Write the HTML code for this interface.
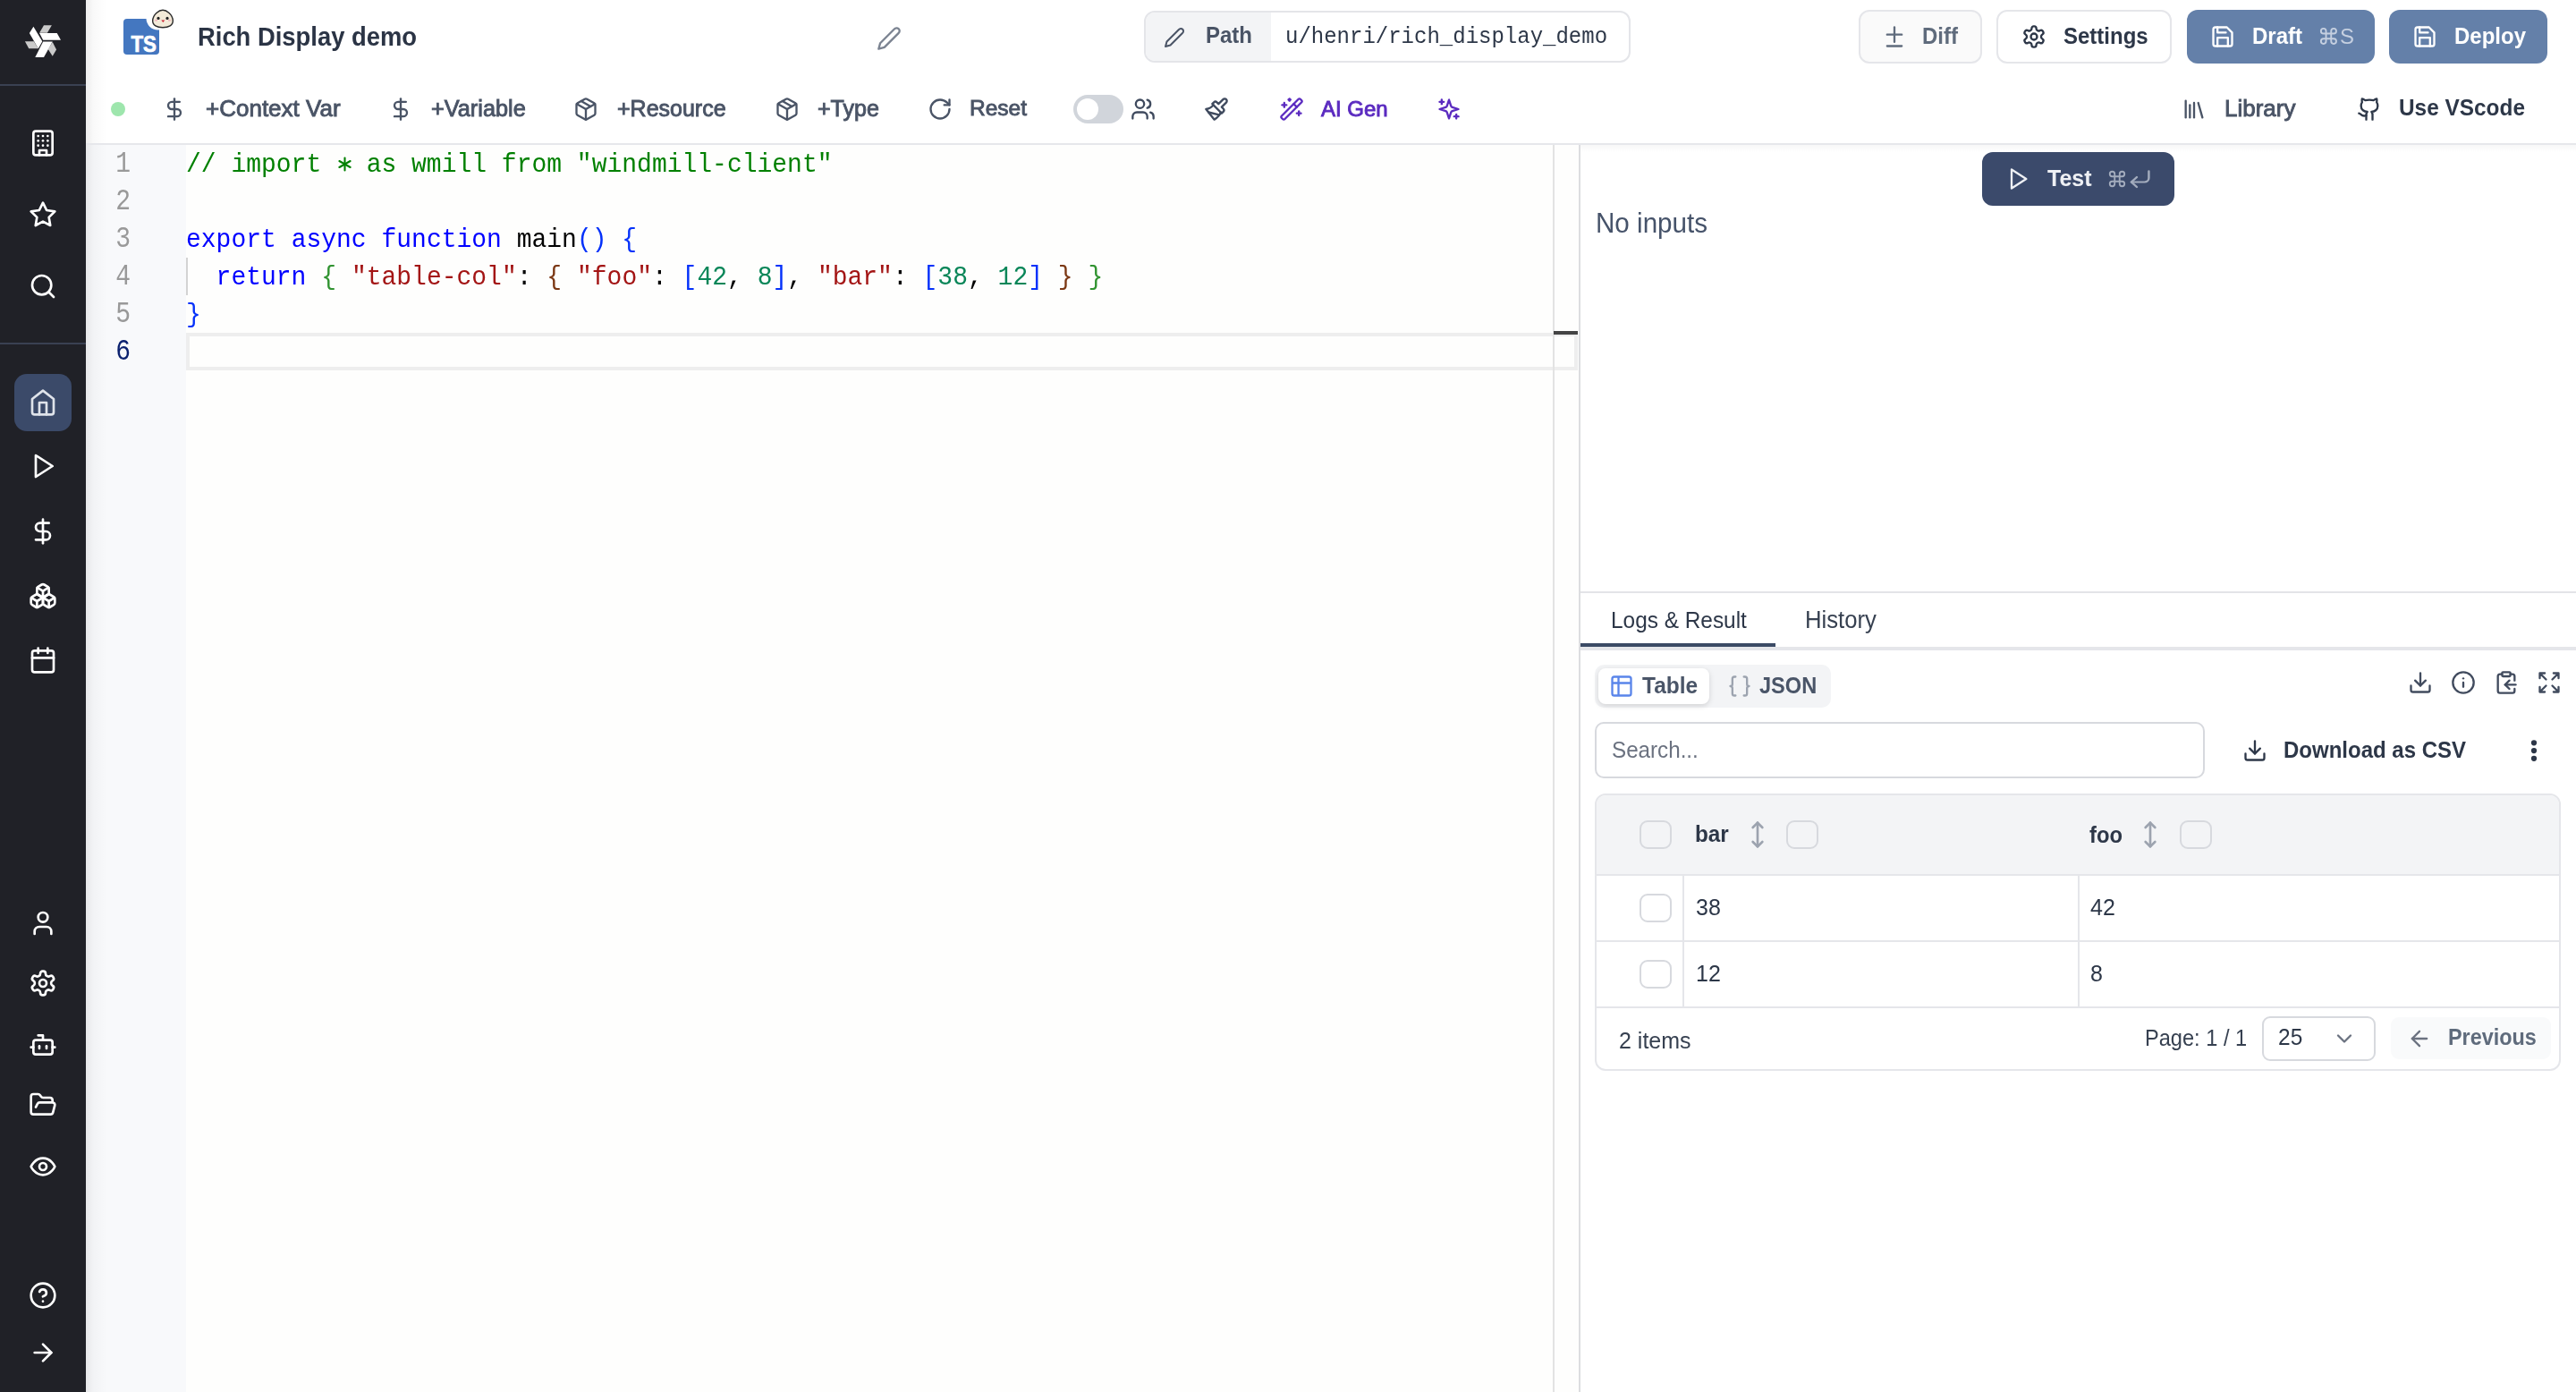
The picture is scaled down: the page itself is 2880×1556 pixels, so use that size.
<!DOCTYPE html>
<html><head><meta charset="utf-8">
<style>
*{box-sizing:border-box;margin:0;padding:0}
html,body{width:2880px;height:1556px;overflow:hidden;background:#fff;font-family:"Liberation Sans",sans-serif}
.a{position:absolute}
.t{position:absolute;white-space:nowrap;line-height:1;will-change:transform}
.n{-webkit-text-stroke:0.9px currentColor}
svg.i{position:absolute;fill:none;stroke:currentColor;stroke-linecap:round;stroke-linejoin:round;overflow:visible}
</style></head><body>

<div class="a" style="left:0px;top:0px;width:96px;height:1556px;background:#202127"></div>
<div class="a" style="left:0px;top:94px;width:96px;height:2px;background:#3a4152"></div>
<div class="a" style="left:0px;top:383px;width:96px;height:2px;background:#3a4152"></div>
<div class="a" style="left:16px;top:418px;width:64px;height:64px;border-radius:14px;background:#3b4a69"></div>
<svg class="a" style="left:18px;top:18px;width:60px;height:60px" viewBox="0 0 1392 1392">
<polygon points="230,655 460,655 575,840 330,840" fill="#cacaca"/>
<polygon points="720,235 925,235 810,435 605,435" fill="#cacaca"/>
<polygon points="945,675 1045,870 945,1040 830,860" fill="#cacaca"/>
<polygon points="450,275 680,655 575,840 345,440" fill="#fff"/>
<polygon points="605,440 1060,440 1160,620 700,620" fill="#fff"/>
<polygon points="700,660 945,660 720,1065 495,1065" fill="#fff"/>
</svg>
<svg class="i" style="left:32px;top:144px;width:32px;height:32px;color:#fff;" viewBox="0 0 24 24" stroke-width="2"><rect width="16" height="20" x="4" y="2" rx="2" ry="2"/><path d="M9 22v-4h6v4"/><path d="M8 6h.01"/><path d="M16 6h.01"/><path d="M12 6h.01"/><path d="M12 10h.01"/><path d="M12 14h.01"/><path d="M16 10h.01"/><path d="M16 14h.01"/><path d="M8 10h.01"/><path d="M8 14h.01"/></svg>
<svg class="i" style="left:32px;top:224px;width:32px;height:32px;color:#fff;" viewBox="0 0 24 24" stroke-width="2"><polygon points="12 2 15.09 8.26 22 9.27 17 14.14 18.18 21.02 12 17.77 5.82 21.02 7 14.14 2 9.27 8.91 8.26 12 2"/></svg>
<svg class="i" style="left:32px;top:304px;width:32px;height:32px;color:#fff;" viewBox="0 0 24 24" stroke-width="2"><circle cx="11" cy="11" r="8"/><path d="m21 21-4.3-4.3"/></svg>
<svg class="i" style="left:32px;top:434px;width:32px;height:32px;color:#dfe3ea;" viewBox="0 0 24 24" stroke-width="2"><path d="m3 9 9-7 9 7v11a2 2 0 0 1-2 2H5a2 2 0 0 1-2-2z"/><polyline points="9 22 9 12 15 12 15 22"/></svg>
<svg class="i" style="left:32px;top:505px;width:32px;height:32px;color:#fff;" viewBox="0 0 24 24" stroke-width="2"><polygon points="6 3 20 12 6 21 6 3"/></svg>
<svg class="i" style="left:32px;top:578px;width:32px;height:32px;color:#fff;" viewBox="0 0 24 24" stroke-width="2"><line x1="12" x2="12" y1="2" y2="22"/><path d="M17 5H9.5a3.5 3.5 0 0 0 0 7h5a3.5 3.5 0 0 1 0 7H6"/></svg>
<svg class="i" style="left:32px;top:650px;width:32px;height:32px;color:#fff;" viewBox="0 0 24 24" stroke-width="2"><path d="M2.97 12.92A2 2 0 0 0 2 14.63v3.24a2 2 0 0 0 .97 1.71l3 1.8a2 2 0 0 0 2.06 0L12 19v-5.5l-5-3-4.03 2.42Z"/><path d="m7 16.5-4.74-2.85"/><path d="m7 16.5 5-3"/><path d="M7 16.5v5.17"/><path d="M12 13.5V19l3.97 2.38a2 2 0 0 0 2.06 0l3-1.8a2 2 0 0 0 .97-1.71v-3.24a2 2 0 0 0-.97-1.71L17 10.5l-5 3Z"/><path d="m17 16.5-5-3"/><path d="m17 16.5 4.74-2.85"/><path d="M17 16.5v5.17"/><path d="M7.97 4.42A2 2 0 0 0 7 6.13v4.37l5 3 5-3V6.13a2 2 0 0 0-.97-1.71l-3-1.8a2 2 0 0 0-2.06 0l-3 1.8Z"/><path d="M12 8 7.26 5.15"/><path d="m12 8 4.74-2.85"/><path d="M12 13.5V8"/></svg>
<svg class="i" style="left:32px;top:722px;width:32px;height:32px;color:#fff;" viewBox="0 0 24 24" stroke-width="2"><rect width="18" height="18" x="3" y="4" rx="2" ry="2"/><line x1="16" x2="16" y1="2" y2="6"/><line x1="8" x2="8" y1="2" y2="6"/><line x1="3" x2="21" y1="10" y2="10"/></svg>
<svg class="i" style="left:32px;top:1016px;width:32px;height:32px;color:#fff;" viewBox="0 0 24 24" stroke-width="2"><path d="M19 21v-2a4 4 0 0 0-4-4H9a4 4 0 0 0-4 4v2"/><circle cx="12" cy="7" r="4"/></svg>
<svg class="i" style="left:32px;top:1083px;width:32px;height:32px;color:#fff;" viewBox="0 0 24 24" stroke-width="2"><path d="M12.22 2h-.44a2 2 0 0 0-2 2v.18a2 2 0 0 1-1 1.73l-.43.25a2 2 0 0 1-2 0l-.15-.08a2 2 0 0 0-2.73.73l-.22.38a2 2 0 0 0 .73 2.73l.15.1a2 2 0 0 1 1 1.72v.51a2 2 0 0 1-1 1.74l-.15.09a2 2 0 0 0-.73 2.73l.22.38a2 2 0 0 0 2.73.73l.15-.08a2 2 0 0 1 2 0l.43.25a2 2 0 0 1 1 1.73V20a2 2 0 0 0 2 2h.44a2 2 0 0 0 2-2v-.18a2 2 0 0 1 1-1.73l.43-.25a2 2 0 0 1 2 0l.15.08a2 2 0 0 0 2.73-.73l.22-.39a2 2 0 0 0-.73-2.73l-.15-.08a2 2 0 0 1-1-1.74v-.5a2 2 0 0 1 1-1.74l.15-.09a2 2 0 0 0 .73-2.73l-.22-.38a2 2 0 0 0-2.73-.73l-.15.08a2 2 0 0 1-2 0l-.43-.25a2 2 0 0 1-1-1.73V4a2 2 0 0 0-2-2z"/><circle cx="12" cy="12" r="3"/></svg>
<svg class="i" style="left:32px;top:1152px;width:32px;height:32px;color:#fff;" viewBox="0 0 24 24" stroke-width="2"><path d="M12 8V4H8"/><rect width="16" height="12" x="4" y="8" rx="2"/><path d="M2 14h2"/><path d="M20 14h2"/><path d="M15 13v2"/><path d="M9 13v2"/></svg>
<svg class="i" style="left:32px;top:1219px;width:32px;height:32px;color:#fff;" viewBox="0 0 24 24" stroke-width="2"><path d="m6 14 1.45-2.9A2 2 0 0 1 9.24 10H20a2 2 0 0 1 1.94 2.5l-1.55 6a2 2 0 0 1-1.94 1.5H4a2 2 0 0 1-2-2V5c0-1.1.9-2 2-2h3.93a2 2 0 0 1 1.66.9l.82 1.2a2 2 0 0 0 1.66.9H18a2 2 0 0 1 2 2v2"/></svg>
<svg class="i" style="left:32px;top:1288px;width:32px;height:32px;color:#fff;" viewBox="0 0 24 24" stroke-width="2"><path d="M2 12s3-7 10-7 10 7 10 7-3 7-10 7-10-7-10-7Z"/><circle cx="12" cy="12" r="3"/></svg>
<svg class="i" style="left:32px;top:1432px;width:32px;height:32px;color:#fff;" viewBox="0 0 24 24" stroke-width="2"><circle cx="12" cy="12" r="10"/><path d="M9.09 9a3 3 0 0 1 5.83 1c0 2-3 3-3 3"/><path d="M12 17h.01"/></svg>
<svg class="i" style="left:32px;top:1496px;width:32px;height:32px;color:#fff;" viewBox="0 0 24 24" stroke-width="2"><path d="M5 12h14"/><path d="m12 5 7 7-7 7"/></svg>
<div class="a" style="left:96px;top:0px;width:24px;height:1556px;background:linear-gradient(to right,rgba(0,0,0,0.07),rgba(0,0,0,0.025) 35%,rgba(0,0,0,0))"></div>
<div class="a" style="left:96px;top:160px;width:2784px;height:2px;background:#e6e7eb"></div>
<svg class="a" style="left:136px;top:10px;width:60px;height:54px" viewBox="0 0 60 54">
<rect x="2" y="11" width="40" height="40" rx="4" fill="#4477c0"/>
<circle cx="40.5" cy="10.5" r="13" fill="#fff"/>
<text x="10.5" y="47.5" font-family="Liberation Sans" font-weight="bold" font-size="25" fill="#fff" stroke="#fff" stroke-width="0.7" textLength="28.5" lengthAdjust="spacingAndGlyphs">TS</text>
<path d="M46 1.2 C50 1.2 57 6 57.3 13 C57.5 18.5 52.5 20.7 46 20.7 C39.5 20.7 34.5 18.5 34.7 13 C35 6 42 1.2 46 1.2 Z" fill="#f3ead8" stroke="#2a2a2a" stroke-width="1.4"/>
<circle cx="41" cy="10.4" r="1.6" fill="#222"/><circle cx="51" cy="10.4" r="1.6" fill="#222"/>
<path d="M44.3 12.4 L48.3 12.4 L46.3 15 Z" fill="#c23"/>
<ellipse cx="38.6" cy="12.8" rx="1.7" ry="1" fill="#f2b8c0"/><ellipse cx="53.4" cy="12.8" rx="1.7" ry="1" fill="#f2b8c0"/>
</svg>
<div class="t" style="left:221.00px;top:27.80px;font-size:27.4px;font-weight:bold;color:#2b3445;font-family:'Liberation Sans',sans-serif;transform-origin:0 23.20px;transform:scaleY(1.1);">Rich Display demo</div>
<svg class="i" style="left:979.8px;top:28.8px;width:28px;height:28px;color:#7b8391;" viewBox="0 0 24 24" stroke-width="2"><path d="M17 3a2.85 2.83 0 1 1 4 4L7.5 20.5 2 22l1.5-5.5Z"/></svg>
<div class="a" style="left:1279px;top:12px;width:544px;height:58px;border:2px solid #e4e5e9;border-radius:12px;background:#fff"></div>
<div class="a" style="left:1281px;top:14px;width:140px;height:54px;background:#f3f4f6;border-radius:10px 0 0 10px"></div>
<svg class="i" style="left:1301px;top:30px;width:24px;height:24px;color:#4a5466;" viewBox="0 0 24 24" stroke-width="2"><path d="M17 3a2.85 2.83 0 1 1 4 4L7.5 20.5 2 22l1.5-5.5Z"/></svg>
<div class="t" style="left:1348.00px;top:28.18px;font-size:24px;font-weight:bold;color:#4a5466;font-family:'Liberation Sans',sans-serif;transform-origin:0 20.32px;transform:scaleY(1.07);">Path</div>
<div class="t" style="left:1437.00px;top:30.11px;font-size:24px;font-weight:normal;color:#2d3748;font-family:'Liberation Mono',monospace;transform-origin:0 18.39px;transform:scaleY(1.1);">u/henri/rich_display_demo</div>
<div class="a" style="left:2078px;top:11px;width:138px;height:60px;border:2px solid #e5e6ea;border-radius:12px;background:#fafafa"></div>
<svg class="i" style="left:2104px;top:27px;width:28px;height:28px;color:#5f6b7c;" viewBox="0 0 24 24" stroke-width="2"><path d="M12 3v14"/><path d="M5 10h14"/><path d="M5 21h14"/></svg>
<div class="t" style="left:2149.00px;top:28.68px;font-size:24px;font-weight:bold;color:#5f6b7c;font-family:'Liberation Sans',sans-serif;transform-origin:0 20.32px;transform:scaleY(1.07);">Diff</div>
<div class="a" style="left:2232px;top:11px;width:196px;height:60px;border:2px solid #e5e6ea;border-radius:12px;background:#fff"></div>
<svg class="i" style="left:2260px;top:27px;width:28px;height:28px;color:#2d3748;" viewBox="0 0 24 24" stroke-width="2"><path d="M12.22 2h-.44a2 2 0 0 0-2 2v.18a2 2 0 0 1-1 1.73l-.43.25a2 2 0 0 1-2 0l-.15-.08a2 2 0 0 0-2.73.73l-.22.38a2 2 0 0 0 .73 2.73l.15.1a2 2 0 0 1 1 1.72v.51a2 2 0 0 1-1 1.74l-.15.09a2 2 0 0 0-.73 2.73l.22.38a2 2 0 0 0 2.73.73l.15-.08a2 2 0 0 1 2 0l.43.25a2 2 0 0 1 1 1.73V20a2 2 0 0 0 2 2h.44a2 2 0 0 0 2-2v-.18a2 2 0 0 1 1-1.73l.43-.25a2 2 0 0 1 2 0l.15.08a2 2 0 0 0 2.73-.73l.22-.39a2 2 0 0 0-.73-2.73l-.15-.08a2 2 0 0 1-1-1.74v-.5a2 2 0 0 1 1-1.74l.15-.09a2 2 0 0 0 .73-2.73l-.22-.38a2 2 0 0 0-2.73-.73l-.15.08a2 2 0 0 1-2 0l-.43-.25a2 2 0 0 1-1-1.73V4a2 2 0 0 0-2-2z"/><circle cx="12" cy="12" r="3"/></svg>
<div class="t" style="left:2307.00px;top:28.68px;font-size:24px;font-weight:bold;color:#2d3748;font-family:'Liberation Sans',sans-serif;transform-origin:0 20.32px;transform:scaleY(1.07);">Settings</div>
<div class="a" style="left:2445px;top:11px;width:210px;height:60px;border-radius:12px;background:#6480a9"></div>
<svg class="i" style="left:2471px;top:27px;width:28px;height:28px;color:#fff;" viewBox="0 0 24 24" stroke-width="2"><path d="M19 21H5a2 2 0 0 1-2-2V5a2 2 0 0 1 2-2h11l5 5v11a2 2 0 0 1-2 2z"/><polyline points="17 21 17 13 7 13 7 21"/><polyline points="7 3 7 8 15 8"/></svg>
<div class="t" style="left:2518.00px;top:28.68px;font-size:24px;font-weight:bold;color:#fff;font-family:'Liberation Sans',sans-serif;transform-origin:0 20.32px;transform:scaleY(1.07);">Draft</div>
<svg class="i" style="left:2592px;top:28.9px;width:22.8px;height:22.8px;color:#c5cfe0;" viewBox="0 0 24 24" stroke-width="2"><path d="M15 6v12a3 3 0 1 0 3-3H6a3 3 0 1 0 3 3V6a3 3 0 1 0-3 3h12a3 3 0 1 0-3-3"/></svg>
<div class="t" style="left:2615.50px;top:29.28px;font-size:24px;font-weight:normal;color:#c5cfe0;font-family:'Liberation Sans',sans-serif;">S</div>
<div class="a" style="left:2671px;top:11px;width:177px;height:60px;border-radius:12px;background:#6480a9"></div>
<svg class="i" style="left:2697px;top:27px;width:28px;height:28px;color:#fff;" viewBox="0 0 24 24" stroke-width="2"><path d="M19 21H5a2 2 0 0 1-2-2V5a2 2 0 0 1 2-2h11l5 5v11a2 2 0 0 1-2 2z"/><polyline points="17 21 17 13 7 13 7 21"/><polyline points="7 3 7 8 15 8"/></svg>
<div class="t" style="left:2744.00px;top:28.68px;font-size:24px;font-weight:bold;color:#fff;font-family:'Liberation Sans',sans-serif;transform-origin:0 20.32px;transform:scaleY(1.07);">Deploy</div>
<div class="a" style="left:124px;top:114px;width:16px;height:16px;border-radius:50%;background:#9ee6ad"></div>
<svg class="i" style="left:181px;top:108px;width:28px;height:28px;color:#4a5466;" viewBox="0 0 24 24" stroke-width="2"><line x1="12" x2="12" y1="2" y2="22"/><path d="M17 5H9.5a3.5 3.5 0 0 0 0 7h5a3.5 3.5 0 0 1 0 7H6"/></svg>
<div class="t n" style="left:230.00px;top:107.99px;font-size:26px;font-weight:normal;color:#4a5466;font-family:'Liberation Sans',sans-serif;">+Context Var</div>
<svg class="i" style="left:434px;top:108px;width:28px;height:28px;color:#4a5466;" viewBox="0 0 24 24" stroke-width="2"><line x1="12" x2="12" y1="2" y2="22"/><path d="M17 5H9.5a3.5 3.5 0 0 0 0 7h5a3.5 3.5 0 0 1 0 7H6"/></svg>
<div class="t n" style="left:482.00px;top:108.58px;font-size:25.3px;font-weight:normal;color:#4a5466;font-family:'Liberation Sans',sans-serif;">+Variable</div>
<svg class="i" style="left:641px;top:108px;width:28px;height:28px;color:#4a5466;" viewBox="0 0 24 24" stroke-width="2"><path d="m7.5 4.27 9 5.15"/><path d="M21 8a2 2 0 0 0-1-1.73l-7-4a2 2 0 0 0-2 0l-7 4A2 2 0 0 0 3 8v8a2 2 0 0 0 1 1.73l7 4a2 2 0 0 0 2 0l7-4A2 2 0 0 0 21 16Z"/><path d="m3.3 7 8.7 5 8.7-5"/><path d="M12 22V12"/></svg>
<div class="t n" style="left:690.00px;top:108.83px;font-size:25px;font-weight:normal;color:#4a5466;font-family:'Liberation Sans',sans-serif;">+Resource</div>
<svg class="i" style="left:866px;top:108px;width:28px;height:28px;color:#4a5466;" viewBox="0 0 24 24" stroke-width="2"><path d="m7.5 4.27 9 5.15"/><path d="M21 8a2 2 0 0 0-1-1.73l-7-4a2 2 0 0 0-2 0l-7 4A2 2 0 0 0 3 8v8a2 2 0 0 0 1 1.73l7 4a2 2 0 0 0 2 0l7-4A2 2 0 0 0 21 16Z"/><path d="m3.3 7 8.7 5 8.7-5"/><path d="M12 22V12"/></svg>
<div class="t n" style="left:913.50px;top:108.83px;font-size:25px;font-weight:normal;color:#4a5466;font-family:'Liberation Sans',sans-serif;">+Type</div>
<svg class="i" style="left:1037px;top:108px;width:28px;height:28px;color:#4a5466;" viewBox="0 0 24 24" stroke-width="2"><path d="M21 12a9 9 0 1 1-9-9c2.52 0 4.93 1 6.74 2.74L21 8"/><path d="M21 3v5h-5"/></svg>
<div class="t n" style="left:1084.00px;top:109.26px;font-size:24.5px;font-weight:normal;color:#4a5466;font-family:'Liberation Sans',sans-serif;">Reset</div>
<div class="a" style="left:1200px;top:106px;width:56px;height:32px;border-radius:16px;background:#d1d5db"></div>
<div class="a" style="left:1204px;top:110px;width:24px;height:24px;border-radius:50%;background:#fff"></div>
<svg class="i" style="left:1264px;top:108px;width:28px;height:28px;color:#3f4a5e;" viewBox="0 0 24 24" stroke-width="2"><path d="M16 21v-2a4 4 0 0 0-4-4H6a4 4 0 0 0-4 4v2"/><circle cx="9" cy="7" r="4"/><path d="M22 21v-2a4 4 0 0 0-3-3.87"/><path d="M16 3.13a4 4 0 0 1 0 7.75"/></svg>
<svg class="i" style="left:1346px;top:108px;width:28px;height:28px;color:#3f4a5e;" viewBox="0 0 24 24" stroke-width="2"><path d="M18.37 2.63 14 7l-1.59-1.59a2 2 0 0 0-2.82 0L8 7l9 9 1.59-1.59a2 2 0 0 0 0-2.82L17 10l4.37-4.37a2.12 2.12 0 1 0-3-3Z"/><path d="M9 8c-2 3-4 3.5-7 4l8 10c2-1 6-5 6-7"/><path d="M14.5 17.5 4.5 15"/></svg>
<svg class="i" style="left:1430px;top:108px;width:28px;height:28px;color:#5b2bc0;" viewBox="0 0 24 24" stroke-width="2"><path d="m21.64 3.64-1.28-1.28a1.21 1.21 0 0 0-1.72 0L2.36 18.64a1.21 1.21 0 0 0 0 1.72l1.28 1.28a1.2 1.2 0 0 0 1.72 0L21.64 5.36a1.2 1.2 0 0 0 0-1.72Z"/><path d="m14 7 3 3"/><path d="M5 6v4"/><path d="M19 14v4"/><path d="M10 2v2"/><path d="M7 8H3"/><path d="M21 16h-4"/><path d="M11 3H9"/></svg>
<div class="t n" style="left:1477.00px;top:109.68px;font-size:24px;font-weight:normal;color:#5b2bc0;font-family:'Liberation Sans',sans-serif;">AI Gen</div>
<svg class="i" style="left:1606px;top:108px;width:28px;height:28px;color:#5b2bc0;" viewBox="0 0 24 24" stroke-width="2"><path d="m12 3-1.912 5.813a2 2 0 0 1-1.275 1.275L3 12l5.813 1.912a2 2 0 0 1 1.275 1.275L12 21l1.912-5.813a2 2 0 0 1 1.275-1.275L21 12l-5.813-1.912a2 2 0 0 1-1.275-1.275L12 3Z"/><path d="M5 3v4"/><path d="M19 17v4"/><path d="M3 5h4"/><path d="M17 19h4"/></svg>
<svg class="i" style="left:2439px;top:108px;width:28px;height:28px;color:#4a5466;" viewBox="0 0 24 24" stroke-width="2"><path d="m16 6 4 14"/><path d="M12 6v14"/><path d="M8 8v12"/><path d="M4 4v16"/></svg>
<div class="t n" style="left:2487.00px;top:107.99px;font-size:26px;font-weight:normal;color:#4a5466;font-family:'Liberation Sans',sans-serif;">Library</div>
<svg class="i" style="left:2635px;top:108px;width:28px;height:28px;color:#2d3748;" viewBox="0 0 24 24" stroke-width="2"><path d="M15 22v-4a4.8 4.8 0 0 0-1-3.5c3 0 6-2 6-5.5.08-1.25-.27-2.48-1-3.5.28-1.15.28-2.35 0-3.5 0 0-1 0-3 1.5-2.64-.5-5.36-.5-8 0C6 2 5 2 5 2c-.3 1.15-.3 2.35 0 3.5A5.403 5.403 0 0 0 4 9c0 3.5 3 5.5 6 5.5-.39.49-.68 1.05-.85 1.65-.17.6-.22 1.23-.15 1.85v4"/><path d="M9 18c-4.51 2-5-2-7-2"/></svg>
<div class="t" style="left:2682.00px;top:109.34px;font-size:24.4px;font-weight:bold;color:#2d3748;font-family:'Liberation Sans',sans-serif;transform-origin:0 20.66px;transform:scaleY(1.06);">Use VScode</div>
<div class="a" style="left:96px;top:162px;width:1669px;height:1394px;background:#fefefd"></div>
<div class="a" style="left:96px;top:162px;width:112px;height:1394px;background:#f8f9fb"></div>
<div class="a" style="left:96px;top:162px;width:24px;height:1394px;background:linear-gradient(to right,rgba(0,0,0,0.07),rgba(0,0,0,0.025) 35%,rgba(0,0,0,0))"></div>
<div class="a" style="left:208px;top:372px;width:1556px;height:42px;border:4px solid #eeeeee"></div>
<div class="a" style="left:1736px;top:162px;width:2px;height:1394px;background:#e3e3e3"></div>
<div class="a" style="left:1737px;top:370px;width:27px;height:4px;background:#444"></div>
<div class="a" style="left:1765px;top:162px;width:2px;height:1394px;background:#dcdde0"></div>
<div class="a" style="left:208px;top:288px;width:2px;height:42px;background:#d3d3d3"></div>
<div class="t" style="left:208px;top:170.55px;font-size:28px;font-family:'Liberation Mono',monospace;white-space:pre;transform-origin:0 21.45px;transform:scaleY(1.08)"><span style="color:#008000">// import &nbsp; as wmill from "windmill-client"</span></div>
<div class="t" style="left:100px;width:46px;text-align:right;top:170.55px;font-size:28px;font-family:'Liberation Mono',monospace;color:#999999;transform-origin:0 21.45px;transform:scaleY(1.18)">1</div>
<div class="t" style="left:100px;width:46px;text-align:right;top:212.55px;font-size:28px;font-family:'Liberation Mono',monospace;color:#999999;transform-origin:0 21.45px;transform:scaleY(1.18)">2</div>
<div class="t" style="left:208px;top:254.55px;font-size:28px;font-family:'Liberation Mono',monospace;white-space:pre;transform-origin:0 21.45px;transform:scaleY(1.08)"><span style="color:#0000ff">export</span> <span style="color:#0000ff">async</span> <span style="color:#0000ff">function</span> <span style="color:#000000">main</span><span style="color:#0431fa">()</span> <span style="color:#0431fa">{</span></div>
<div class="t" style="left:100px;width:46px;text-align:right;top:254.55px;font-size:28px;font-family:'Liberation Mono',monospace;color:#999999;transform-origin:0 21.45px;transform:scaleY(1.18)">3</div>
<div class="t" style="left:208px;top:296.55px;font-size:28px;font-family:'Liberation Mono',monospace;white-space:pre;transform-origin:0 21.45px;transform:scaleY(1.08)">  <span style="color:#0000ff">return</span> <span style="color:#319331">{</span> <span style="color:#a31515">"table-col"</span><span style="color:#000000">:</span> <span style="color:#7b3814">{</span> <span style="color:#a31515">"foo"</span><span style="color:#000000">:</span> <span style="color:#0431fa">[</span><span style="color:#098658">42</span><span style="color:#000000">,</span> <span style="color:#098658">8</span><span style="color:#0431fa">]</span><span style="color:#000000">,</span> <span style="color:#a31515">"bar"</span><span style="color:#000000">:</span> <span style="color:#0431fa">[</span><span style="color:#098658">38</span><span style="color:#000000">,</span> <span style="color:#098658">12</span><span style="color:#0431fa">]</span> <span style="color:#7b3814">}</span> <span style="color:#319331">}</span></div>
<div class="t" style="left:100px;width:46px;text-align:right;top:296.55px;font-size:28px;font-family:'Liberation Mono',monospace;color:#999999;transform-origin:0 21.45px;transform:scaleY(1.18)">4</div>
<div class="t" style="left:208px;top:338.55px;font-size:28px;font-family:'Liberation Mono',monospace;white-space:pre;transform-origin:0 21.45px;transform:scaleY(1.08)"><span style="color:#0431fa">}</span></div>
<div class="t" style="left:100px;width:46px;text-align:right;top:338.55px;font-size:28px;font-family:'Liberation Mono',monospace;color:#999999;transform-origin:0 21.45px;transform:scaleY(1.18)">5</div>
<div class="t" style="left:100px;width:46px;text-align:right;top:380.55px;font-size:28px;font-family:'Liberation Mono',monospace;color:#0b216f;transform-origin:0 21.45px;transform:scaleY(1.18)">6</div>
<svg class="a" style="left:376.5px;top:174.5px;width:17px;height:17px" viewBox="0 0 17 17"><g stroke="#008000" stroke-width="2.1" stroke-linecap="round"><line x1="8.5" y1="1.5" x2="8.5" y2="15.5"/><line x1="2.4" y1="5" x2="14.6" y2="12"/><line x1="2.4" y1="12" x2="14.6" y2="5"/></g></svg>
<div class="a" style="left:1767px;top:162px;width:1113px;height:1394px;background:#fff"></div>
<div class="a" style="left:1767px;top:162px;width:1113px;height:8px;background:linear-gradient(to bottom,rgba(0,0,0,0.03),rgba(0,0,0,0))"></div>
<div class="a" style="left:2216px;top:170px;width:215px;height:60px;border-radius:12px;background:#3b4a6b"></div>
<svg class="i" style="left:2242px;top:186px;width:28px;height:28px;color:#eef0f4;" viewBox="0 0 24 24" stroke-width="2"><polygon points="6 3 20 12 6 21 6 3"/></svg>
<div class="t" style="left:2289.00px;top:187.33px;font-size:25px;font-weight:bold;color:#eef0f4;font-family:'Liberation Sans',sans-serif;transform-origin:0 21.17px;transform:scaleY(1.04);">Test</div>
<svg class="i" style="left:2355.5px;top:188.5px;width:22px;height:22px;color:#a3acbd;" viewBox="0 0 24 24" stroke-width="2"><path d="M15 6v12a3 3 0 1 0 3-3H6a3 3 0 1 0 3 3V6a3 3 0 1 0-3 3h12a3 3 0 1 0-3-3"/></svg>
<svg class="i" style="left:2378.3px;top:187.1px;width:29.3px;height:26.4px;color:#a3acbd" viewBox="0 0 24 24" preserveAspectRatio="none" stroke-width="2"><polyline points="9 10 4 15 9 20"/><path d="M20 4v7a4 4 0 0 1-4 4H4"/></svg>
<div class="t" style="left:1784.00px;top:235.44px;font-size:29.6px;font-weight:normal;color:#46536a;font-family:'Liberation Sans',sans-serif;transform-origin:0 25.06px;transform:scaleY(1.035);">No inputs</div>
<div class="a" style="left:1767px;top:661px;width:1113px;height:2px;background:#e3e4e8"></div>
<div class="t" style="left:1801.00px;top:682.34px;font-size:24.4px;font-weight:normal;color:#2d3748;font-family:'Liberation Sans',sans-serif;transform-origin:0 20.66px;transform:scaleY(1.08);">Logs &amp; Result</div>
<div class="t" style="left:2018.00px;top:681.24px;font-size:25.7px;font-weight:normal;color:#374151;font-family:'Liberation Sans',sans-serif;transform-origin:0 21.76px;transform:scaleY(1.05);">History</div>
<div class="a" style="left:1767px;top:723px;width:1113px;height:4px;background:#e5e6ea"></div>
<div class="a" style="left:1767px;top:719px;width:218px;height:4px;background:#3b4a65"></div>
<div class="a" style="left:1783px;top:743px;width:264px;height:48px;border-radius:10px;background:#f3f4f6"></div>
<div class="a" style="left:1787px;top:746.5px;width:124px;height:40px;border-radius:8px;background:#fff;box-shadow:0 2px 6px rgba(0,0,0,0.14)"></div>
<svg class="i" style="left:1799px;top:753px;width:28px;height:28px;color:#5a85ea;" viewBox="0 0 24 24" stroke-width="2"><path d="M9 3H5a2 2 0 0 0-2 2v4m6-6h10a2 2 0 0 1 2 2v4M9 3v18m0 0h10a2 2 0 0 0 2-2V9M9 21H5a2 2 0 0 1-2-2V9m0 0h18"/></svg>
<div class="t" style="left:1836.00px;top:755.26px;font-size:24.5px;font-weight:bold;color:#4a5568;font-family:'Liberation Sans',sans-serif;transform-origin:0 20.74px;transform:scaleY(1.07);">Table</div>
<svg class="i" style="left:1931px;top:753px;width:28px;height:28px;color:#9ca3af;" viewBox="0 0 24 24" stroke-width="2"><path d="M8 3H7a2 2 0 0 0-2 2v5a2 2 0 0 1-2 2 2 2 0 0 1 2 2v5c0 1.1.9 2 2 2h1"/><path d="M16 21h1a2 2 0 0 0 2-2v-5c0-1.1.9-2 2-2a2 2 0 0 1-2-2V5a2 2 0 0 0-2-2h-1"/></svg>
<div class="t" style="left:1967.00px;top:756.02px;font-size:23.6px;font-weight:bold;color:#4a5568;font-family:'Liberation Sans',sans-serif;transform-origin:0 19.98px;transform:scaleY(1.08);">JSON</div>
<svg class="i" style="left:2692px;top:749px;width:28px;height:28px;color:#414b5e;" viewBox="0 0 24 24" stroke-width="2"><path d="M21 15v4a2 2 0 0 1-2 2H5a2 2 0 0 1-2-2v-4"/><polyline points="7 10 12 15 17 10"/><line x1="12" x2="12" y1="15" y2="3"/></svg>
<svg class="i" style="left:2740px;top:749px;width:28px;height:28px;color:#414b5e;" viewBox="0 0 24 24" stroke-width="2"><circle cx="12" cy="12" r="10"/><path d="M12 16v-4"/><path d="M12 8h.01"/></svg>
<svg class="i" style="left:2788px;top:749px;width:28px;height:28px;color:#414b5e;" viewBox="0 0 24 24" stroke-width="2"><rect width="8" height="4" x="8" y="2" rx="1" ry="1"/><path d="M8 4H6a2 2 0 0 0-2 2v14a2 2 0 0 0 2 2h12a2 2 0 0 0 2-2v-2"/><path d="M16 4h2a2 2 0 0 1 2 2v4"/><path d="M21 14H11"/><path d="m15 10-4 4 4 4"/></svg>
<svg class="i" style="left:2836px;top:749px;width:28px;height:28px;color:#414b5e;" viewBox="0 0 24 24" stroke-width="2"><path d="m21 21-6-6m6 6v-4.8m0 4.8h-4.8"/><path d="M3 16.2V21m0 0h4.8M3 21l6-6"/><path d="M21 7.8V3m0 0h-4.8M21 3l-6 6"/><path d="M3 7.8V3m0 0h4.8M3 3l6 6"/></svg>
<div class="a" style="left:1783px;top:807px;width:682px;height:63px;border:2px solid #d7d9de;border-radius:10px;background:#fff"></div>
<div class="t" style="left:1802.00px;top:826.51px;font-size:24.2px;font-weight:normal;color:#6b7280;font-family:'Liberation Sans',sans-serif;transform-origin:0 20.49px;transform:scaleY(1.06);">Search...</div>
<svg class="i" style="left:2507px;top:825px;width:28px;height:28px;color:#2d3748;" viewBox="0 0 24 24" stroke-width="2"><path d="M21 15v4a2 2 0 0 1-2 2H5a2 2 0 0 1-2-2v-4"/><polyline points="7 10 12 15 17 10"/><line x1="12" x2="12" y1="15" y2="3"/></svg>
<div class="t" style="left:2553.00px;top:826.68px;font-size:24px;font-weight:bold;color:#2d3748;font-family:'Liberation Sans',sans-serif;transform-origin:0 20.32px;transform:scaleY(1.07);">Download as CSV</div>
<svg class="i" style="left:2818px;top:824px;width:30px;height:30px;color:#2d3748;fill:#2d3748" viewBox="0 0 24 24" stroke-width="3"><circle cx="12" cy="12" r="1"/><circle cx="12" cy="5" r="1"/><circle cx="12" cy="19" r="1"/></svg>
<div class="a" style="left:1783px;top:887px;width:1080px;height:310px;border:2px solid #e5e6ea;border-radius:12px;background:#fff;overflow:hidden"></div>
<div class="a" style="left:1785px;top:889px;width:1076px;height:89px;background:#f3f4f6;border-radius:10px 10px 0 0"></div>
<div class="a" style="left:1785px;top:977px;width:1076px;height:2px;background:#e5e6ea"></div>
<div class="a" style="left:1785px;top:1051px;width:1076px;height:2px;background:#e5e6ea"></div>
<div class="a" style="left:1785px;top:1125px;width:1076px;height:2px;background:#e5e6ea"></div>
<div class="a" style="left:1881px;top:979px;width:2px;height:146px;background:#e5e6ea"></div>
<div class="a" style="left:2323px;top:979px;width:2px;height:146px;background:#e5e6ea"></div>
<div class="a" style="left:1833px;top:917px;width:36px;height:32px;border:2px solid #d7d9de;border-radius:9px;background:#f3f4f6"></div>
<div class="t" style="left:1895.00px;top:921.43px;font-size:24.3px;font-weight:bold;color:#2d3748;font-family:'Liberation Sans',sans-serif;transform-origin:0 20.57px;transform:scaleY(1.06);">bar</div>
<svg class="i" style="left:1948.7px;top:916.7px;width:32px;height:32px;color:#9ca3af;" viewBox="0 0 24 24" stroke-width="2"><polyline points="8 18 12 22 16 18"/><polyline points="8 6 12 2 16 6"/><line x1="12" x2="12" y1="2" y2="22"/></svg>
<div class="a" style="left:1997px;top:917px;width:36px;height:32px;border:2px solid #d7d9de;border-radius:9px;background:#f3f4f6"></div>
<div class="t" style="left:2336.00px;top:921.85px;font-size:23.8px;font-weight:bold;color:#2d3748;font-family:'Liberation Sans',sans-serif;transform-origin:0 20.15px;transform:scaleY(1.08);">foo</div>
<svg class="i" style="left:2387.7px;top:916.7px;width:32px;height:32px;color:#9ca3af;" viewBox="0 0 24 24" stroke-width="2"><polyline points="8 18 12 22 16 18"/><polyline points="8 6 12 2 16 6"/><line x1="12" x2="12" y1="2" y2="22"/></svg>
<div class="a" style="left:2437px;top:917px;width:36px;height:32px;border:2px solid #d7d9de;border-radius:9px;background:#f3f4f6"></div>
<div class="a" style="left:1833px;top:999px;width:36px;height:32px;border:2px solid #d7d9de;border-radius:9px;background:#fff"></div>
<div class="t" style="left:1896.00px;top:1001.83px;font-size:25px;font-weight:normal;color:#2d3748;font-family:'Liberation Sans',sans-serif;transform-origin:0 21.17px;transform:scaleY(1.04);">38</div>
<div class="t" style="left:2337.00px;top:1001.83px;font-size:25px;font-weight:normal;color:#2d3748;font-family:'Liberation Sans',sans-serif;transform-origin:0 21.17px;transform:scaleY(1.04);">42</div>
<div class="a" style="left:1833px;top:1073px;width:36px;height:32px;border:2px solid #d7d9de;border-radius:9px;background:#fff"></div>
<div class="t" style="left:1896.00px;top:1075.83px;font-size:25px;font-weight:normal;color:#2d3748;font-family:'Liberation Sans',sans-serif;transform-origin:0 21.17px;transform:scaleY(1.04);">12</div>
<div class="t" style="left:2337.00px;top:1075.83px;font-size:25px;font-weight:normal;color:#2d3748;font-family:'Liberation Sans',sans-serif;transform-origin:0 21.17px;transform:scaleY(1.04);">8</div>
<div class="t" style="left:1810.00px;top:1150.83px;font-size:25px;font-weight:normal;color:#374151;font-family:'Liberation Sans',sans-serif;transform-origin:0 21.17px;transform:scaleY(1.04);">2 items</div>
<div class="t" style="left:2398.00px;top:1150.02px;font-size:23.6px;font-weight:normal;color:#374151;font-family:'Liberation Sans',sans-serif;transform-origin:0 19.98px;transform:scaleY(1.09);">Page: 1 / 1</div>
<div class="a" style="left:2529px;top:1136px;width:127px;height:50px;border:2px solid #d7d9de;border-radius:9px;background:#fff"></div>
<div class="t" style="left:2547.00px;top:1148.26px;font-size:24.5px;font-weight:normal;color:#2d3748;font-family:'Liberation Sans',sans-serif;transform-origin:0 20.74px;transform:scaleY(1.06);">25</div>
<svg class="i" style="left:2607px;top:1147px;width:28px;height:28px;color:#6b7280;" viewBox="0 0 24 24" stroke-width="2"><path d="m6 9 6 6 6-6"/></svg>
<div class="a" style="left:2673px;top:1137px;width:179px;height:47px;border-radius:9px;background:#f9fafb"></div>
<svg class="i" style="left:2691px;top:1147px;width:28px;height:28px;color:#6b7280;" viewBox="0 0 24 24" stroke-width="2"><path d="m12 19-7-7 7-7"/><path d="M19 12H5"/></svg>
<div class="t" style="left:2737.00px;top:1149.19px;font-size:23.4px;font-weight:bold;color:#5f6b7c;font-family:'Liberation Sans',sans-serif;transform-origin:0 19.81px;transform:scaleY(1.09);">Previous</div>
<script>(function(){var w=window.innerWidth;if(w&&Math.abs(w-2880)>4){document.documentElement.style.zoom=(w/2880);}})();</script>
</body></html>
